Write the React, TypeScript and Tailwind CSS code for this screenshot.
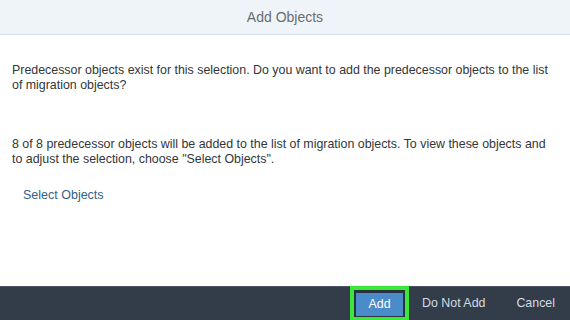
export default function App() {
  return (
    <div className="w-[570px] h-[320px] flex flex-col bg-white font-['Liberation_Sans',Arial,sans-serif] overflow-hidden">
      <header className="h-[35px] shrink-0 flex items-center justify-center bg-[#eff4f9] border-b border-[#d1e2f0]">
        <h1 className="text-[14px] text-[#6a6d70]">Add Objects</h1>
      </header>

      <main className="flex-1 pl-3 pr-[12px] pt-[28px] text-[12.4px] leading-[15px] text-[#32363a]">
        <p>
          Predecessor objects exist for this selection. Do you want to add the predecessor objects to the list of
          migration objects?
        </p>
        <p className="mt-[44px]">
          8 of 8 predecessor objects will be added to the list of migration objects. To view these objects and to
          adjust the selection, choose "Select Objects".
        </p>
        <button className="mt-[21px] ml-[11px] text-[12.5px] text-[#346187]">Select Objects</button>
      </main>

      <footer className="h-[34px] shrink-0 flex items-center justify-end bg-[#323d49] border-t border-[#4a5664] pr-[15px]">
        <div className="border-[4px] border-[#3ae83a] pl-[2px] py-[1px] bg-[#2a3440]">
          <button className="h-[23px] w-[49px] bg-[#4a8bc9] border-r-2 border-[#2a3440] text-[12.4px] text-white">
            Add
          </button>
        </div>
        <button className="ml-[13px] text-[12.4px] text-[#d3dce5]">Do Not Add</button>
        <button className="ml-[31px] text-[12.4px] text-[#d3dce5]">Cancel</button>
      </footer>
    </div>
  );
}
